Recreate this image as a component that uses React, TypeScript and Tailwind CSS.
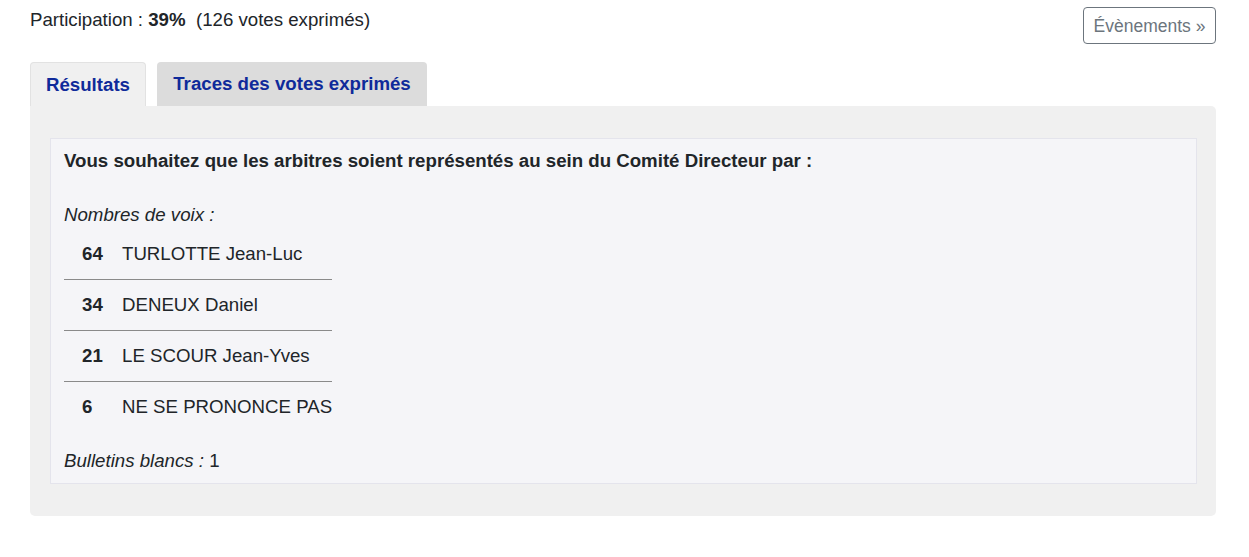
const rows = [
  { votes: 64, name: "TURLOTTE Jean-Luc" },
  { votes: 34, name: "DENEUX Daniel" },
  { votes: 21, name: "LE SCOUR Jean-Yves" },
  { votes: 6, name: "NE SE PRONONCE PAS" },
]

export default function App() {
  return (
    <div className="min-h-screen bg-white pl-[30px] pr-[33px] pt-[7px] text-[18.67px] text-[#212529] font-['Liberation_Sans',Arial,sans-serif]">
      {/* Header */}
      <div className="flex items-start justify-between">
        <p className="mt-[1px] leading-6">
          Participation : <b>39%</b>&nbsp; (126 votes exprimés)
        </p>
        <button className="h-[37px] w-[133px] rounded-[4px] border border-[#6c757d] text-[17.5px] text-[#6c757d] leading-6">
          Évènements »
        </button>
      </div>

      {/* Tabs */}
      <div className="mt-[18px] flex gap-[11px]">
        <div className="h-[44px] w-[116px] flex items-center justify-center rounded-t-[4px] border border-b-0 border-[#e2e2e2] bg-[#f0f0f0] text-[18.67px] font-bold text-[#0f2a9a]">
          Résultats
        </div>
        <div className="h-[44px] w-[270px] flex items-center justify-center rounded-t-[4px] bg-[#dcdcdc] text-[18.67px] font-bold text-[#0f2a9a]">
          Traces des votes exprimés
        </div>
      </div>

      {/* Panel */}
      <div className="bg-[#f0f0f0] rounded-b-[5px] rounded-tr-[5px] pl-5 pr-[19px] py-8">
        <div className="bg-[#f5f5f8] border border-[#e4e4ec] px-[13px] pt-[13px] pb-[13px]">
          <p className="font-bold leading-[18px]">
            Vous souhaitez que les arbitres soient représentés au sein du Comité Directeur par :
          </p>
          <p className="mt-9 italic leading-[18px]">Nombres de voix :</p>
          <div className="mt-[5px] w-fit">
            {rows.map((r, i) => (
              <div
                key={i}
                className={`flex py-4 leading-[18px] ${i < rows.length - 1 ? "border-b border-[#8a8a8a]" : ""}`}
              >
                <span className="w-[58px] pl-[18px] font-bold">{r.votes}</span>
                <span>{r.name}</span>
              </div>
            ))}
          </div>
          <p className="mt-5 leading-[18px]">
            <i>Bulletins blancs :</i> 1
          </p>
        </div>
      </div>
    </div>
  )
}
